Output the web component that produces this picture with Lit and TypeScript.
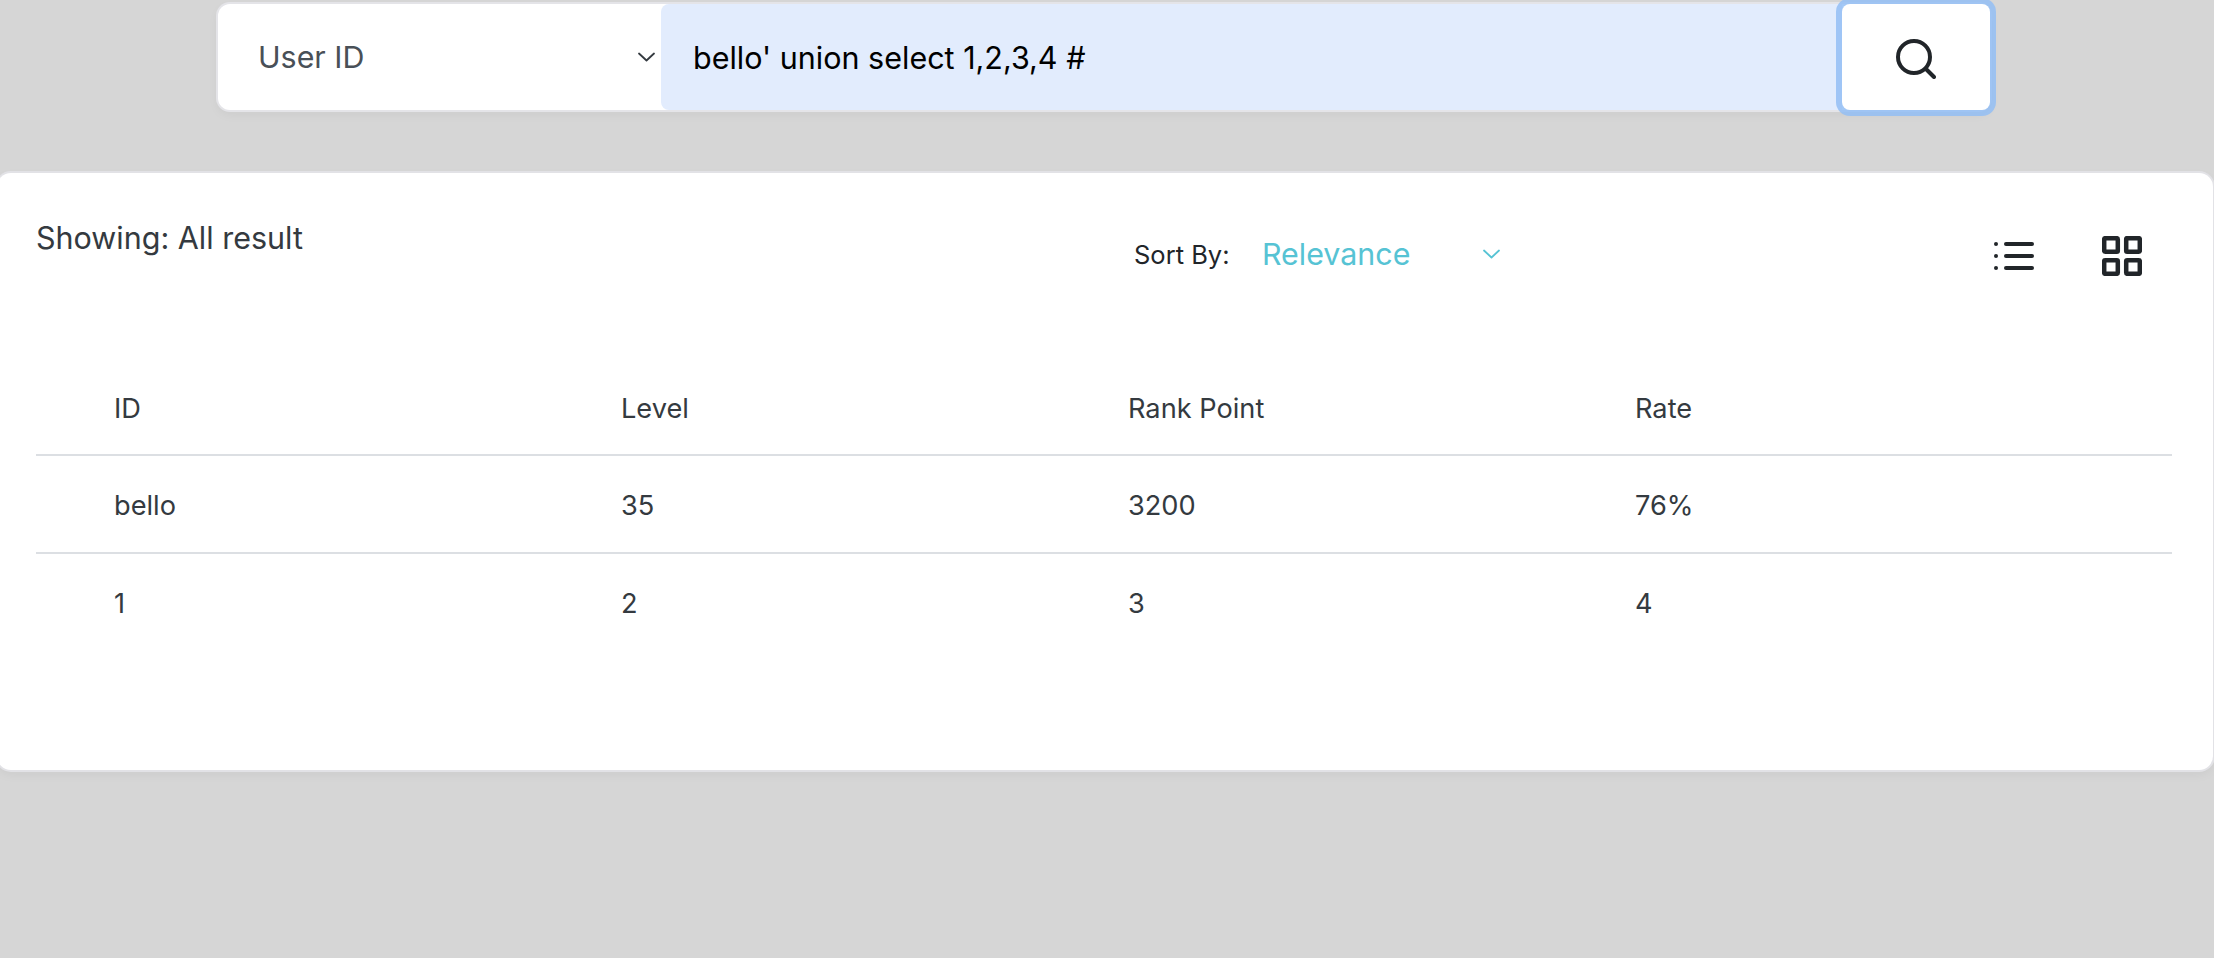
import { LitElement, html, css, svg } from "lit";
import { customElement } from "lit/decorators.js";

const rows = [
  ["bello", "35", "3200", "76%"],
  ["1", "2", "3", "4"],
];

const chevron = svg`<path d="M1 1.5l7.500 7 7.500-7" fill="none" stroke="currentColor" stroke-width="1.8" stroke-linecap="round" stroke-linejoin="round"/>`;

@customElement("app-root")
export class AppRoot extends LitElement {
  static styles = css`
    :host { display: block; width: 2214px; height: 958px; overflow: hidden; background: #d6d6d6; font-family: Inter, sans-serif; color: #343a40; }
    .search { display: flex; width: 1772px; height: 106px; margin: 4px 0 0 218px; background: #fff; border-radius: 12px; box-shadow: 0 0 0 2px #e4e4e8, 0 4px 12px rgba(0,0,0,.05); }
    .select { box-sizing: border-box; width: 443px; display: flex; align-items: center; justify-content: space-between; padding: 0 6px 0 40px; font-size: 30.4px; color: #495057; flex: none; }
    .select svg { width: 17px; height: 10px; color: #343a40; }
    .input { flex: 1; display: flex; align-items: center; background: #e2ecfd; border-radius: 8px 0 0 8px; padding-left: 32px; font-size: 30.5px; color: #000; }
    .btn { box-sizing: border-box; width: 148px; height: 106px; padding-top: 4px; flex: none; display: flex; align-items: center; justify-content: center; background: #fff; border-radius: 8px; box-shadow: 0 0 0 6px rgba(147,190,245,.85); color: #212529; }
    .card { box-sizing: border-box; width: 2216px; height: 597px; margin: 63px 0 0 -3px; background: #fff; border-radius: 14px; box-shadow: 0 0 0 2px #e2e2e6, 0 4px 12px rgba(0,0,0,.05); padding: 0 0 0 39px; }
    .top { display: flex; height: 185.5px; align-items: flex-start; }
    .showing { width: 1098px; margin-top: 45px; font-size: 30.5px; line-height: 40px; flex: none; }
    .sort { display: flex; align-items: center; margin-top: 56px; height: 50px; flex: none; }
    .sort-label { font-size: 25.5px; color: #212529; width: 128px; }
    .sort-val { font-size: 30.4px; color: #56c3d4; width: 221px; }
    .sort svg { width: 17px; height: 10px; color: #56c3d4; }
    .icons { display: flex; margin-left: 494px; gap: 68px; align-items: center; height: 50px; margin-top: 58px; color: #212529; }
    .table { width: 2136px; }
    .row { display: grid; grid-template-columns: repeat(4, 507px); align-items: center; padding: 3px 0 0 78px; height: 97.5px; font-size: 27.2px; color: #343a40; box-sizing: border-box; }
    .row:not(:last-child) { border-bottom: 2px solid #dcdfe3; }
    .head { padding-top: 5px; }
  `;

  render() {
    return html`
      <div class="search">
        <div class="select">User ID <svg viewBox="0 0 17 10">${chevron}</svg></div>
        <div class="input">bello' union select 1,2,3,4 #</div>
        <div class="btn">
          <svg width="40" height="40" viewBox="0 0 40 40" fill="none" stroke="currentColor" stroke-width="4" stroke-linecap="round"><circle cx="18" cy="18" r="16"/><path d="M30 30l8 8"/></svg>
        </div>
      </div>
      <div class="card">
        <div class="top">
          <div class="showing">Showing: All result</div>
          <div class="sort">
            <div class="sort-label">Sort By:</div>
            <div class="sort-val">Relevance</div>
            <svg viewBox="0 0 17 10">${chevron}</svg>
          </div>
          <div class="icons">
            <svg width="40" height="28" viewBox="0 0 40 28" fill="currentColor"><circle cx="2" cy="2" r="2"/><circle cx="2" cy="14" r="2"/><circle cx="2" cy="26" r="2"/><rect x="10" y="0" width="30" height="4" rx="2"/><rect x="10" y="12" width="30" height="4" rx="2"/><rect x="10" y="24" width="30" height="4" rx="2"/></svg>
            <svg width="40" height="40" viewBox="0 0 40 40" fill="none" stroke="currentColor" stroke-width="4.500" stroke-linejoin="round"><rect x="2.200" y="2.200" width="13.600" height="13.600" rx="1"/><rect x="24.200" y="2.200" width="13.600" height="13.600" rx="1"/><rect x="2.200" y="24.200" width="13.600" height="13.600" rx="1"/><rect x="24.200" y="24.200" width="13.600" height="13.600" rx="1"/></svg>
          </div>
        </div>
        <div class="table">
          <div class="row head"><div>ID</div><div>Level</div><div>Rank Point</div><div>Rate</div></div>
          ${rows.map(r => html`<div class="row">${r.map(c => html`<div>${c}</div>`)}</div>`)}
        </div>
      </div>
    `;
  }
}
